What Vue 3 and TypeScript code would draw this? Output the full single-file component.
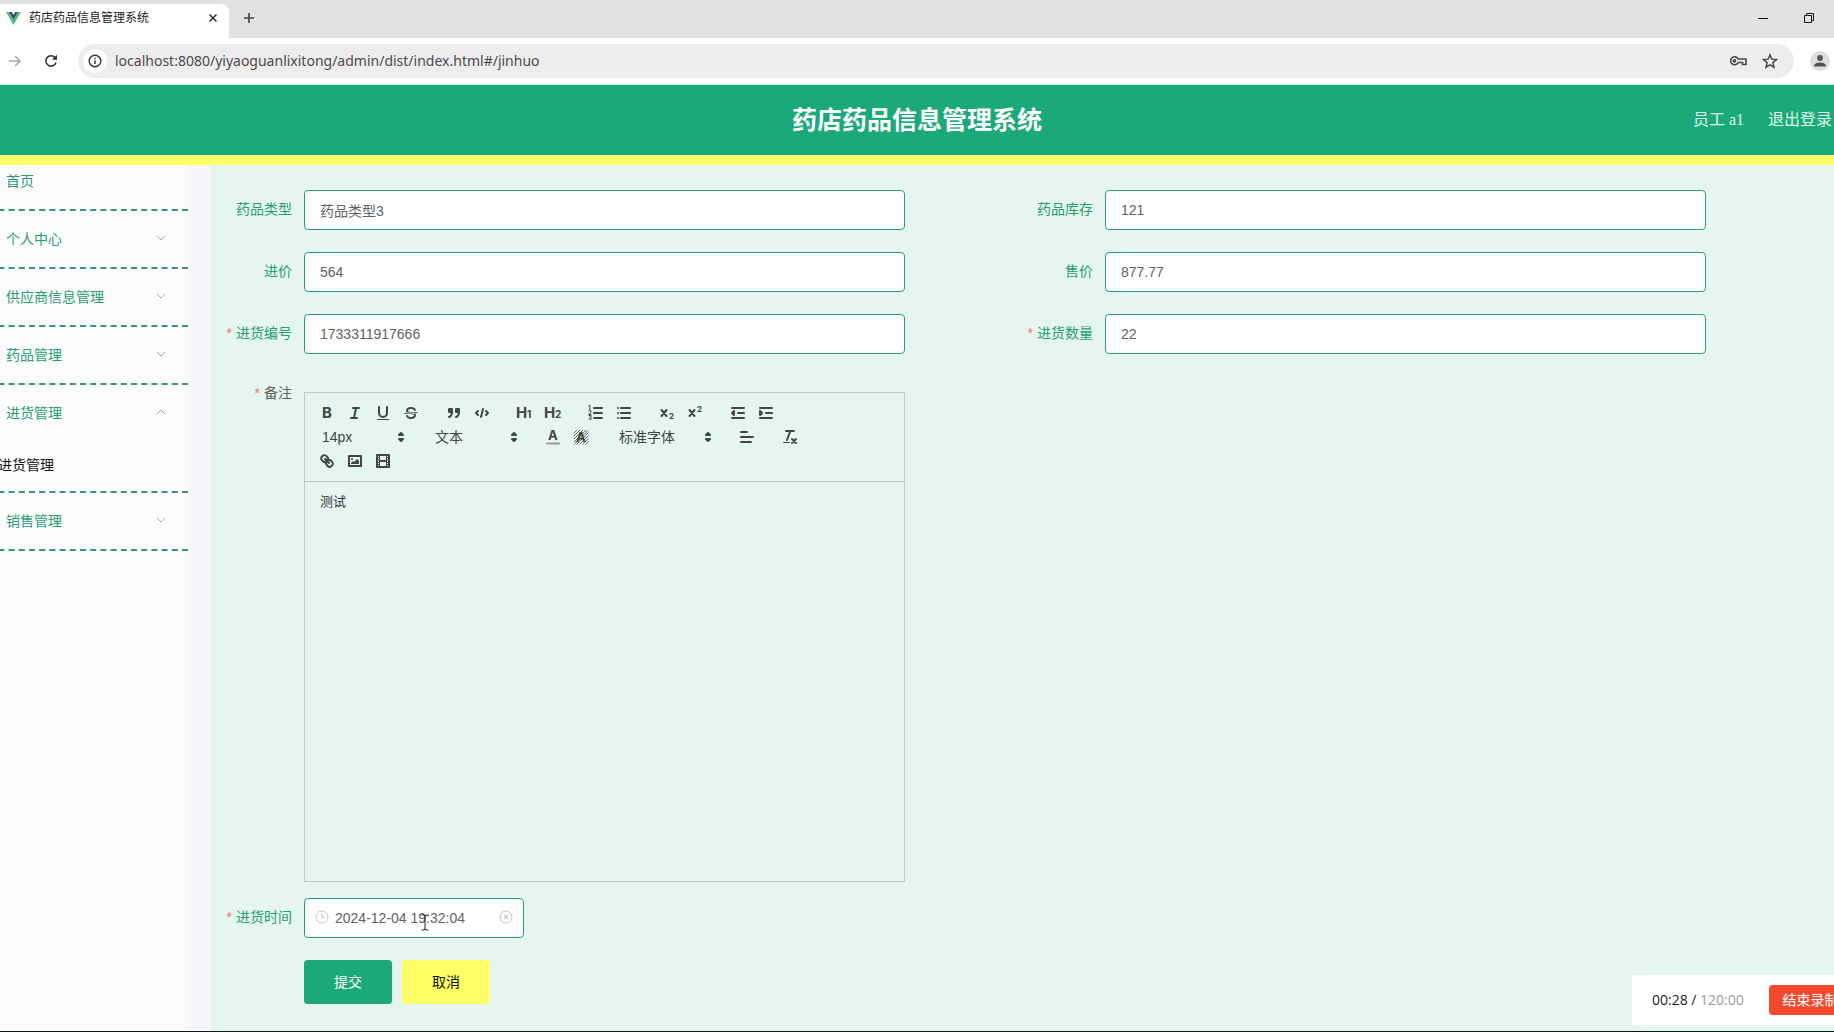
<script setup lang="ts">
import { ref } from 'vue'

interface MenuItem {
  label: string
  children?: string[]
  open?: boolean
}

interface Field {
  id: string
  label: string
  value: string
  required?: boolean
}

const systemName = '药店药品信息管理系统'

const menu = ref<MenuItem[]>([
  { label: '个人中心', children: [] },
  { label: '供应商信息管理', children: [] },
  { label: '药品管理', children: [] },
  { label: '进货管理', children: ['进货管理'], open: true },
  { label: '销售管理', children: [] },
])

const fields = ref<Field[]>([
  { id: 'type', label: '药品类型', value: '药品类型3' },
  { id: 'stock', label: '药品库存', value: '121' },
  { id: 'cost', label: '进价', value: '564' },
  { id: 'price', label: '售价', value: '877.77' },
  { id: 'number', label: '进货编号', value: '1733311917666', required: true },
  { id: 'amount', label: '进货数量', value: '22', required: true },
])

const url = ref('localhost:8080/yiyaoguanlixitong/admin/dist/index.html#/jinhuo')
const purchaseTime = ref('2024-12-04 19:32:04')
</script>

<template>
  <div class="window">
    <div class="tabs">
      <div class="tab">
        <svg class="vue-logo" viewBox="0 0 16 14" aria-hidden="true">
          <path d="M0 0h3.2L8 8.3 12.800 0H16L8 14z" fill="#52b788" />
          <path d="M3.200 0h3L8 3.200 9.800 0h3L8 8.300z" fill="#2f4b5c" />
        </svg>
        <span class="tab-title">{{ systemName }}</span>
        <button class="tab-close" aria-label="关闭标签页">
          <svg viewBox="0 0 10 10" width="10" height="10"><path d="M1.500 1.500l7 7M8.500 1.500l-7 7" stroke="#333" stroke-width="1.600" /></svg>
        </button>
      </div>
      <button class="tab-new" aria-label="新标签页">
        <svg viewBox="0 0 12 12" width="12" height="12"><path d="M6 1v10M1 6h10" stroke="#444" stroke-width="1.600" /></svg>
      </button>
      <div class="window-controls">
        <button aria-label="最小化"><svg viewBox="0 0 12 12" width="12" height="12"><path d="M1 6.500h10" stroke="#111" /></svg></button>
        <button aria-label="还原"><svg viewBox="0 0 12 12" width="12" height="12"><path d="M1.500 3.500h7v7h-7zM3.500 3V1.500h7v7H9" fill="none" stroke="#111" /></svg></button>
      </div>
    </div>

    <div class="address-row">
      <button class="nav" aria-label="前进">
        <svg viewBox="0 0 14 14" width="14" height="14"><path d="M1 7h11M7 2l5 5-5 5" fill="none" stroke="#a5a5a5" stroke-width="1.500" /></svg>
      </button>
      <button class="nav" aria-label="刷新">
        <svg viewBox="0 0 14 14" width="14" height="14"><path d="M12 8.500A5.200 5.200 0 1 1 11 3.500L12.500 5" fill="none" stroke="#333" stroke-width="1.600" /><path d="M13 .8v5H8z" fill="#333" /></svg>
      </button>
      <div class="address">
        <span class="site-info">
          <svg viewBox="0 0 14 14" width="14" height="14"><circle cx="7" cy="7" r="5.800" fill="none" stroke="#333" stroke-width="1.400" /><path d="M7 6.300V10M7 3.800v1.400" stroke="#333" stroke-width="1.400" /></svg>
        </span>
        <input v-model="url" class="url" aria-label="地址" />
        <button aria-label="密码">
          <svg viewBox="0 0 18 12" width="18" height="12"><path d="M9.200 4h7.800v5.500h-3.500V7.500H9.200A4 4 0 1 1 9.200 4z" fill="none" stroke="#4a4a4a" stroke-width="1.600" /><circle cx="5.400" cy="5.800" r="1.900" fill="#4a4a4a" /></svg>
        </button>
        <button aria-label="收藏">
          <svg viewBox="0 0 16 16" width="16" height="16"><path d="M8 1.800l1.800 4.300 4.700.4-3.600 3.100 1.100 4.600L8 11.800l-4 2.400 1.100-4.600L1.500 6.500l4.700-.4z" fill="none" stroke="#444" stroke-width="1.400" /></svg>
        </button>
      </div>
      <button class="profile" aria-label="用户">
        <svg viewBox="0 0 20 20" width="20" height="20"><circle cx="10" cy="10" r="10" fill="#dedede" /><circle cx="10" cy="7" r="2.900" fill="#555" /><path d="M4 15.500c0-3 2.500-4 6-4s6 1 6 4z" fill="#555" /></svg>
      </button>
    </div>

    <header class="header">
      <h1>{{ systemName }}</h1>
      <div class="account">
        <span>员工 a1</span>
        <a href="#/login">退出登录</a>
      </div>
    </header>

    <div class="body">
      <aside class="sidebar">
        <nav class="menu">
          <a class="home" href="#/index">首页</a>
          <div v-for="item in menu" :key="item.label" class="menu-group">
            <button class="menu-item" :aria-expanded="!!item.open" @click="item.open = !item.open">
              <span>{{ item.label }}</span>
              <svg :class="{ up: item.open }" viewBox="0 0 10 6" width="10" height="6"><path d="M.8.8L5 5 9.200.8" fill="none" stroke="#a2a6a8" /></svg>
            </button>
            <template v-if="item.open">
              <a v-for="child in item.children" :key="child" class="submenu-item" href="#/jinhuo">{{ child }}</a>
            </template>
          </div>
        </nav>
      </aside>

      <main class="main">
        <form class="form" @submit.prevent>
          <div v-for="field in fields" :key="field.id" class="field">
            <label :for="field.id" :class="{ required: field.required }">{{ field.label }}</label>
            <input :id="field.id" v-model="field.value" class="input" />
          </div>

          <div class="field full remark">
            <span id="remark-label" class="label required">备注</span>
            <div class="editor">
              <div class="toolbar">
                <span class="group">
                  <button type="button" aria-label="粗体"><svg viewBox="0 0 18 18"><text class="bold" x="4" y="14">B</text></svg></button>
                  <button type="button" aria-label="斜体"><svg viewBox="0 0 18 18"><path class="s" d="M7 4h6M5 14h6M8 14l2-10" /></svg></button>
                  <button type="button" aria-label="下划线"><svg viewBox="0 0 18 18"><path class="s" d="M5 3v6a4 4 0 0 0 8 0V3" /><rect x="3" y="15" width="12" height="1" rx=".5" /></svg></button>
                  <button type="button" aria-label="删除线"><svg viewBox="0 0 18 18"><path d="M2.500 9.500l13-1" stroke="#444" /><path d="M9.007 8C6.542 7.791 6 7.519 6 6.500 6 5.792 7.283 5 9 5c1.571 0 2.765.679 2.969 1.309a1 1 0 0 0 1.900-.617C13.356 4.106 11.354 3 9 3 6.200 3 4 4.538 4 6.500a3.200 3.200 0 0 0 .5 1.843Z" /><path d="M8.984 10C11.457 10.208 12 10.479 12 11.500c0 .708-1.283 1.500-3 1.500-1.571 0-2.765-.679-2.969-1.309a1 1 0 1 0-1.900.617C4.644 13.894 6.646 15 9 15c2.800 0 5-1.538 5-3.500a3.200 3.200 0 0 0-.5-1.843Z" /></svg></button>
                </span>
                <span class="group">
                  <button type="button" aria-label="引用"><svg viewBox="0 0 18 18"><path class="s f" d="M4 5h3v3H4zM11 5h3v3h-3z" /><path class="s" d="M7 8c0 4.031-3 5-3 5M14 8c0 4.031-3 5-3 5" /></svg></button>
                  <button type="button" aria-label="代码"><svg viewBox="0 0 18 18"><path class="s" d="M5 7L3 9l2 2M13 7l2 2-2 2M10 5L8 13" /></svg></button>
                </span>
                <span class="group">
                  <button type="button" aria-label="一级标题"><svg viewBox="0 0 18 18"><text class="bold" x="0" y="14">H</text><text class="digit" x="11" y="14">1</text></svg></button>
                  <button type="button" aria-label="二级标题"><svg viewBox="0 0 18 18"><text class="bold" x="0" y="14">H</text><text class="digit" x="11" y="14">2</text></svg></button>
                </span>
                <span class="group">
                  <button type="button" aria-label="有序列表"><svg viewBox="0 0 18 18"><path class="s" d="M7 4h8M7 9h8M7 14h8" /><text class="tiny" x="1" y="6">1</text><text class="tiny" x="1" y="11">2</text><text class="tiny" x="1" y="16">3</text></svg></button>
                  <button type="button" aria-label="无序列表"><svg viewBox="0 0 18 18"><path class="s" d="M6 4h9M6 9h9M6 14h9M3 4h0M3 9h0M3 14h0" /></svg></button>
                </span>
                <span class="group">
                  <button type="button" aria-label="下标"><svg viewBox="0 0 18 18"><path class="s" d="M3.500 6l5 6M8.500 6l-5 6" /><text class="small" x="11" y="15">2</text></svg></button>
                  <button type="button" aria-label="上标"><svg viewBox="0 0 18 18"><path class="s" d="M3.500 6l5 6M8.500 6l-5 6" /><text class="small" x="11" y="8">2</text></svg></button>
                </span>
                <span class="group">
                  <button type="button" aria-label="减少缩进"><svg viewBox="0 0 18 18"><path class="s" d="M3 4h12M3 14h12M9 9h6" /><path class="s f" d="M5 7v4L3 9z" /></svg></button>
                  <button type="button" aria-label="增加缩进"><svg viewBox="0 0 18 18"><path class="s" d="M3 4h12M3 14h12M9 9h6" /><path class="s f" d="M3 7v4l2-2z" /></svg></button>
                </span>
                <span class="group">
                  <span class="picker">
                    <select aria-label="字号"><option>14px</option></select>
                    <svg viewBox="0 0 18 18"><path class="s f" d="M7 11l2 2 2-2zM7 7l2-2 2 2z" /></svg>
                  </span>
                </span>
                <span class="group">
                  <span class="picker">
                    <select aria-label="段落"><option>文本</option></select>
                    <svg viewBox="0 0 18 18"><path class="s f" d="M7 11l2 2 2-2zM7 7l2-2 2 2z" /></svg>
                  </span>
                </span>
                <span class="group">
                  <button type="button" aria-label="文字颜色"><svg viewBox="0 0 18 18"><text class="mid" x="4" y="12">A</text><path class="s" opacity=".5" d="M3 15.500h12" /></svg></button>
                  <button type="button" aria-label="背景颜色"><svg viewBox="0 0 18 18"><path d="M2 5l3-3M2 8l6-6M2 11l9-9M2 14l12-12M2 16.500L16 2.500M4.500 16.500l12-12M7.500 16.500l9-9M10.500 16.500l6-6M13.500 16.500l3-3" stroke="#444" stroke-width=".8" /><text class="mid" x="4" y="14">A</text></svg></button>
                </span>
                <span class="group">
                  <span class="picker wide">
                    <select aria-label="字体"><option>标准字体</option></select>
                    <svg viewBox="0 0 18 18"><path class="s f" d="M7 11l2 2 2-2zM7 7l2-2 2 2z" /></svg>
                  </span>
                </span>
                <span class="group">
                  <button type="button" aria-label="对齐"><svg viewBox="0 0 18 18"><path class="s" d="M3 4h6M3 9h12M3 14h10" /></svg></button>
                </span>
                <span class="group">
                  <button type="button" aria-label="清除格式"><svg viewBox="0 0 18 18"><path class="s" d="M5 3h8M6 12l3.350-9M11 11l4 4M15 11l-4 4" /><rect x="2" y="14" width="7" height="1" rx=".5" /></svg></button>
                </span>
                <span class="group">
                  <button type="button" aria-label="链接"><svg viewBox="0 0 18 18"><path class="s" d="M7 7l4 4M8.900 4.577a3.476 3.476 0 0 1 .36 4.679A3.476 3.476 0 0 1 4.577 8.900C3.185 7.500 2.035 6.400 4.217 4.217S7.500 3.185 8.900 4.577Z" /><path class="s" d="M13.423 9.100a3.476 3.476 0 0 0-4.679-.36 3.476 3.476 0 0 0 .36 4.679c1.392 1.392 2.500 2.542 4.679.36S14.815 10.500 13.423 9.100Z" /></svg></button>
                  <button type="button" aria-label="图片"><svg viewBox="0 0 18 18"><rect class="s" x="3" y="4" width="12" height="10" /><circle cx="6" cy="7" r="1" /><path d="M5 12v-1l2-2 1 1 3-3 2 2v3z" /></svg></button>
                  <button type="button" aria-label="视频"><svg viewBox="0 0 18 18"><rect class="s" x="3" y="3" width="12" height="12" /><path d="M5 3h1v12H5zM12 3h1v12h-1zM5 8h8v2H5zM3 5h3v1H3zM3 7h3v1H3zM3 10h3v1H3zM3 12h3v1H3zM12 5h3v1h-3zM12 7h3v1h-3zM12 10h3v1h-3zM12 12h3v1h-3z" /></svg></button>
                </span>
              </div>
              <div class="editor-content" contenteditable="true" role="textbox" aria-labelledby="remark-label">测试</div>
            </div>
          </div>

          <div class="field full">
            <label for="time" class="required">进货时间</label>
            <div class="date">
              <svg class="clock" viewBox="0 0 14 14" width="14" height="14"><circle cx="7" cy="7" r="6" fill="none" stroke="#c0c4cc" /><path d="M7 3.500V7.500h3" fill="none" stroke="#c0c4cc" /></svg>
              <input id="time" v-model="purchaseTime" class="input" />
              <svg class="clear" viewBox="0 0 14 14" width="14" height="14"><circle cx="7" cy="7" r="6" fill="none" stroke="#c0c4cc" /><path d="M5 5l4 4M9 5l-4 4" stroke="#c0c4cc" stroke-width="1.200" /></svg>
              <svg class="cursor" viewBox="0 0 8 17" width="8" height="17"><path d="M.5 1h2.500l1 1 1-1h2.500M4 2v13M.5 16h2.500l1-1 1 1h2.500" fill="none" stroke="#222" /></svg>
            </div>
          </div>

          <div class="actions full">
            <button type="submit" class="submit">提交</button>
            <button type="button" class="cancel">取消</button>
          </div>
        </form>
      </main>
    </div>

    <div class="recorder">
      <span class="elapsed">00:28 / <span class="limit">120:00</span></span>
      <button>结束录制</button>
    </div>
  </div>
</template>

<style>
body {
  margin: 0;
}
</style>

<style scoped>
.window {
  position: relative;
  display: flex;
  flex-direction: column;
  box-sizing: border-box;
  min-height: 100vh;
  overflow: hidden;
  border-bottom: 1px solid #0b1c15;
  font-family: "Liberation Sans", "Noto Sans CJK SC", sans-serif;
  font-size: 14px;
  background: #fff;
}

.window * {
  box-sizing: border-box;
}

button {
  padding: 0;
  border: 0;
  background: none;
  font: inherit;
  color: inherit;
  cursor: pointer;
}

a {
  color: inherit;
  text-decoration: none;
}

.tabs {
  display: flex;
  height: 38px;
  background: #e2e2e2;
}

.tab {
  display: flex;
  align-items: center;
  width: 229px;
  margin-top: 4px;
  padding: 0 11px 6px 6px;
  border-radius: 0 8px 0 0;
  background: #fff;
}

.vue-logo {
  width: 15px;
  height: 13px;
}

.tab-title {
  flex: 1;
  margin-left: 8px;
  font-size: 12px;
  line-height: 16px;
  color: #222;
}

.tab-close,
.tab-new,
.window-controls button {
  display: flex;
  align-items: center;
}

.tab-new {
  margin-left: 14px;
  height: 36px;
}

.window-controls {
  display: flex;
  gap: 34px;
  height: 36px;
  margin-left: auto;
  padding-right: 19px;
}

.address-row {
  display: flex;
  align-items: center;
  height: 46px;
  padding: 0 4px 0 8px;
}

.nav {
  display: flex;
  width: 14px;
  margin-right: 22px;
}

.nav + .nav {
  margin-right: 20px;
}

.address {
  display: flex;
  flex: 1;
  align-items: center;
  gap: 15px;
  height: 34px;
  padding: 0 16px 0 5px;
  border-radius: 17px;
  background: #eeeced;
}

.address button {
  display: flex;
}

.site-info {
  display: flex;
  align-items: center;
  justify-content: center;
  width: 24px;
  height: 24px;
  border-radius: 12px;
  background: #fff;
}

.url {
  flex: 1;
  margin-left: -7px;
  padding: 0;
  border: 0;
  outline: 0;
  background: none;
  font: 14px/20px "Noto Sans", sans-serif;
  color: #4c4c4c;
}

.profile {
  display: flex;
  margin-left: 16px;
}

.header {
  display: grid;
  grid-template-columns: 1fr auto 1fr;
  align-items: center;
  height: 81px;
  border-top: 1px solid #d5f1e7;
  border-bottom: 10px solid #ff6;
  background: #1ca97a;
  color: #fff;
}

.header h1 {
  grid-column: 2;
  margin: 0;
  font-size: 25px;
  line-height: 36px;
}

.account {
  display: flex;
  justify-content: flex-end;
  gap: 24px;
  padding-right: 2px;
  font: 16px/24px "Liberation Serif", "Noto Sans CJK SC", serif;
  color: #dff5ec;
}

.body {
  display: flex;
  flex: 1;
}

.sidebar {
  width: 211px;
  overflow: hidden;
  border-right: 23px solid #f5f7fa;
  background: #fcfcfc;
  color: #299c73;
}

.menu {
  margin-left: -22px;
}

.home {
  display: block;
  padding: 0 28px 12px;
  border-bottom: 2px dashed #399574;
  line-height: 32px;
}

.menu-group {
  border-bottom: 2px dashed #399574;
}

.menu-item {
  display: flex;
  align-items: center;
  justify-content: space-between;
  width: 100%;
  height: 56px;
  padding: 0 22px 2px 28px;
}

.menu-item .up {
  transform: rotate(180deg);
}

.submenu-item {
  display: block;
  padding: 0 0 2px 20px;
  line-height: 48px;
  color: #111;
}

.main {
  flex: 1;
  min-width: 0;
  padding: 25px 8px 24px 13px;
  background: #e4f6ef;
}

.form {
  display: grid;
  grid-template-columns: 1fr 1fr;
  row-gap: 22px;
}

.field {
  display: flex;
  width: 85%;
}

.full {
  grid-column: 1 / -1;
}

.field.full {
  width: calc(50% * 0.85);
}

.field label,
.label {
  flex: none;
  width: 80px;
  padding-right: 12px;
  line-height: 38px;
  text-align: right;
  color: #299c73;
}

.field .label {
  line-height: 34px;
  color: #606266;
}

.required::before {
  content: "*";
  margin-right: 4px;
  color: #f56c6c;
}

.input {
  flex: 1;
  min-width: 0;
  width: 100%;
  height: 40px;
  padding: 0 15px;
  border: 1px solid #299c7a;
  border-radius: 4px;
  outline: 0;
  background: #fff;
  font: inherit;
  color: #606266;
}

.remark {
  margin-bottom: -6px;
}

.editor {
  flex: 1;
  display: flex;
  flex-direction: column;
  min-width: 0;
  min-height: 490px;
  margin-top: 16px;
  border: 1px solid #c3ccc8;
}

.toolbar {
  display: flex;
  flex-wrap: wrap;
  padding: 8px;
  border-bottom: 1px solid #c3ccc8;
  color: #444;
}

.group {
  display: flex;
  margin-right: 15px;
}

.group button {
  width: 28px;
  height: 24px;
  padding: 3px 5px;
}

.toolbar svg {
  display: block;
  width: 18px;
  height: 18px;
  fill: #444;
}

.toolbar text {
  font: 700 14px Inter, sans-serif;
}

.toolbar .bold {
  font-size: 15px;
}

.toolbar .digit {
  font-size: 10px;
}

.toolbar .small {
  font-size: 8px;
}

.toolbar .tiny {
  font-size: 6px;
}

.toolbar .mid {
  font-size: 13px;
}

.s {
  fill: none;
  stroke: #444;
  stroke-width: 2;
  stroke-linecap: round;
  stroke-linejoin: round;
}

.f {
  fill: #444;
}

.picker {
  position: relative;
  width: 98px;
  height: 24px;
}

.picker.wide {
  width: 108px;
}

.picker select {
  width: 100%;
  height: 24px;
  padding: 0 8px 0 9px;
  border: 0;
  appearance: none;
  background: none;
  font: inherit;
  color: #444;
}

.picker svg {
  position: absolute;
  top: 3px;
  right: 1px;
  pointer-events: none;
}

.editor-content {
  flex: 1;
  padding: 11px 15px;
  outline: 0;
  font-size: 13px;
  line-height: 18px;
  color: #333;
}

.date {
  position: relative;
  width: 220px;
}

.date .input {
  padding: 0 30px;
}

.clock,
.clear {
  position: absolute;
  top: 12px;
  left: 11px;
}

.clear {
  right: 11px;
  left: auto;
}

.cursor {
  position: absolute;
  top: 16px;
  left: 117px;
}

.actions {
  display: flex;
  gap: 10px;
  padding-left: 80px;
}

.actions button {
  width: 88px;
  height: 44px;
  padding-bottom: 2px;
  border-radius: 4px;
}

.submit {
  background: #1ca97a;
  color: #fff;
}

.cancel {
  background: #ff6;
  color: #111;
}

.recorder {
  position: absolute;
  right: -28px;
  bottom: 6px;
  display: flex;
  align-items: center;
  justify-content: space-between;
  width: 230px;
  height: 50px;
  padding: 0 10px 0 20px;
  border-radius: 4px;
  background: #fff;
  font: 14px/20px "Open Sans", "Noto Sans CJK SC", sans-serif;
  color: #222;
}

.limit {
  color: #999;
}

.recorder button {
  width: 83px;
  height: 30px;
  border-radius: 4px;
  background: #f5492f;
  color: #fff;
}
</style>
